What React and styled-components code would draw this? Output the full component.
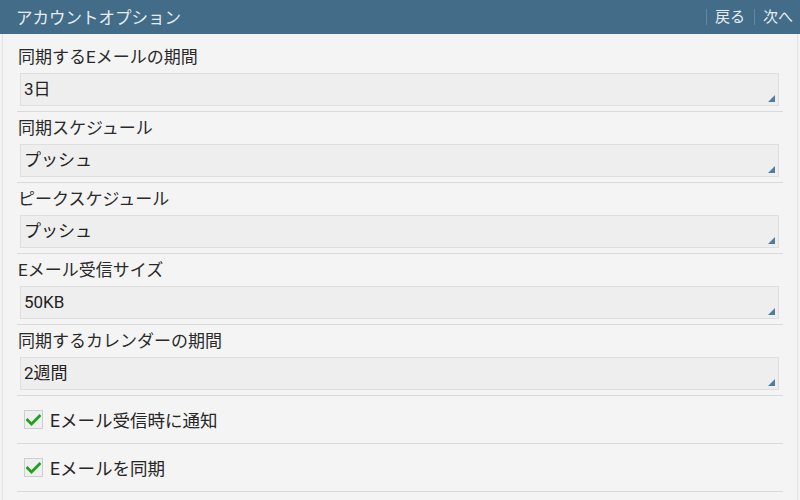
import styled, { createGlobalStyle } from "styled-components";

const GlobalStyle = createGlobalStyle`
  html, body {
    margin: 0;
    padding: 0;
    background: #f4f4f4;
  }
  body {
    font-family: Roboto, "Noto Sans CJK JP", sans-serif;
    color: #262626;
  }
`;

const settings = [
  { label: "同期するEメールの期間", value: "3日" },
  { label: "同期スケジュール", value: "プッシュ" },
  { label: "ピークスケジュール", value: "プッシュ" },
  { label: "Eメール受信サイズ", value: "50KB" },
  { label: "同期するカレンダーの期間", value: "2週間" },
];

const checks = ["Eメール受信時に通知", "Eメールを同期"];

const App = () => {
  return (
    <Page>
      <GlobalStyle />
      <Header>
        <Title>アカウントオプション</Title>
        <Actions>
          <ActionButton>戻る</ActionButton>
          <ActionButton>次へ</ActionButton>
        </Actions>
      </Header>
      <Content>
        {settings.map((s) => (
          <Row key={s.label}>
            <Label>{s.label}</Label>
            <Select>
              {s.value}
              <Corner />
            </Select>
          </Row>
        ))}
        {checks.map((c) => (
          <CheckRow key={c}>
            <Box>
              <svg width="15" height="12" viewBox="0 0 15 12">
                <polyline
                  points="1.5,6 5.5,10 13.5,2"
                  fill="none"
                  stroke="#1ea21e"
                  strokeWidth="2.8"
                  strokeLinecap="square"
                />
              </svg>
            </Box>
            <CheckLabel>{c}</CheckLabel>
          </CheckRow>
        ))}
      </Content>
    </Page>
  );
};

const Page = styled.div`
  width: 800px;
  height: 500px;
  overflow: hidden;
  background: #f4f4f4;
`;

const Header = styled.div`
  height: 34px;
  background: #426c88;
  display: flex;
  align-items: center;
  justify-content: space-between;
  padding: 0 0 0 16px;
  box-sizing: border-box;
`;

const Title = styled.div`
  color: #e6edf2;
  font-size: 16.5px;
`;

const Actions = styled.div`
  display: flex;
  align-items: center;
  height: 100%;
  padding-right: 7px;
`;

const ActionButton = styled.div`
  display: flex;
  align-items: center;
  color: #e6edf2;
  font-size: 15px;
  padding: 0 0 0 8px;
  margin-left: 9px;
  border-left: 1px solid rgba(255, 255, 255, 0.18);
  height: 16px;
  line-height: 16px;
`;

const Content = styled.div`
  margin: 0 2px;
  padding: 7px 14px 0;
  height: 466px;
  border-left: 1px solid #e4e4e4;
  border-right: 1px solid #e4e4e4;
`;

const Row = styled.div`
  border-bottom: 1px solid #d9d9d9;
  padding-bottom: 5px;
`;

const Label = styled.div`
  height: 32px;
  line-height: 32px;
  font-size: 17px;
  padding-left: 1px;
  color: #2a2a2a;
`;

const Select = styled.div`
  position: relative;
  margin: 0 4px 0 3px;
  height: 31px;
  line-height: 31px;
  border: 1px solid #dedede;
  background: #eeeeee;
  padding-left: 3px;
  font-size: 17px;
  color: #222;
`;

const Corner = styled.span`
  position: absolute;
  right: 3px;
  bottom: 3px;
  width: 0;
  height: 0;
  border-left: 7px solid transparent;
  border-bottom: 7px solid #4f7e9c;
`;

const CheckRow = styled.div`
  display: flex;
  align-items: center;
  height: 47px;
  border-bottom: 1px solid #d9d9d9;
  padding-left: 7px;
`;

const Box = styled.div`
  width: 17px;
  height: 17px;
  border: 1px solid #c9cfd2;
  background: #efefef;
  display: flex;
  align-items: center;
  justify-content: center;
  margin-right: 7px;
`;

const CheckLabel = styled.div`
  font-size: 17.5px;
  color: #262626;
`;

export default App;
